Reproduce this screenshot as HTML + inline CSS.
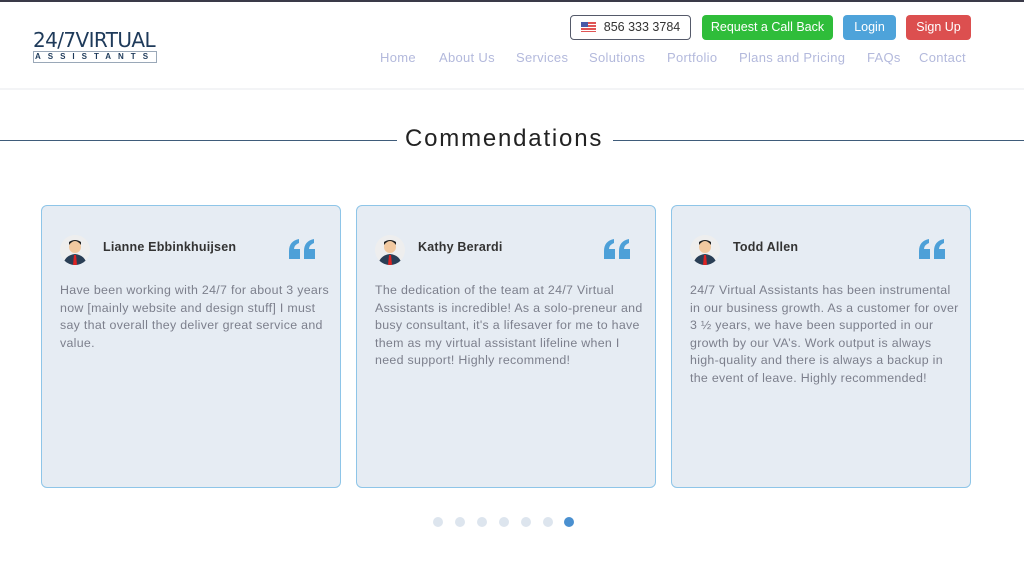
<!DOCTYPE html><html><head><style>
*{margin:0;padding:0;box-sizing:border-box}
body{width:1024px;height:575px;overflow:hidden;background:#fff;font-family:"Liberation Sans",sans-serif;position:relative}
.a{position:absolute}
.btn{position:absolute;top:15px;height:25px;border-radius:4px;color:#fff;font-size:12.5px;line-height:25px;text-align:center}
.nav{position:absolute;top:50px;font-size:13px;color:#b3b9dc;letter-spacing:.3px}
.card{position:absolute;top:205px;width:300px;height:283px;background:#e6ecf3;border:1px solid #8ec5e8;border-radius:6px}
.av{position:absolute;left:18px;top:29px;width:30px;height:30px;border-radius:50%;background:#eee;overflow:hidden}
.nm{position:absolute;left:61px;top:34px;font-size:12.5px;font-weight:bold;color:#333;letter-spacing:.2px}
.q{position:absolute;left:247px;top:33px}
.tx{position:absolute;left:18px;top:76px;width:274px;font-size:12.4px;line-height:17.5px;color:#7c7f8c;letter-spacing:.3px}
.dot{position:absolute;top:517px;width:10px;height:10px;border-radius:50%;background:#dde5ee}
</style></head><body>
<div class="a" style="left:0;top:0;width:1024px;height:2px;background:#3a3a48"></div>
<div class="a" style="left:0;top:88px;width:1024px;height:2px;background:#f3f4f6"></div>
<div class="a" style="left:33px;top:29px;font-size:20px;color:#1e3a5a;font-family:'DejaVu Sans',sans-serif;line-height:22px;letter-spacing:-0.6px">24/7VIRTUAL</div>
<div class="a" style="left:33px;top:51px;width:124px;height:12px;border:1px solid #9aa8b8;font-size:8px;color:#1e3a5a;letter-spacing:7px;text-align:center;line-height:10px;font-weight:bold">ASSISTANTS</div>
<div class="btn" style="left:570px;width:121px;border:1px solid #555a6a;color:#333;line-height:23px;background:#fff"><span style="display:inline-block;width:15px;height:10px;background:repeating-linear-gradient(#e05555 0 2px,#fff 2px 3px);position:relative;vertical-align:-1px;margin-right:8px"><span style="position:absolute;left:0;top:0;width:7px;height:5px;background:#4a5aa8"></span></span>856 333 3784</div>
<div class="btn" style="left:702px;width:131px;background:#2fbd3a">Request a Call Back</div>
<div class="btn" style="left:843px;width:53px;background:#4ea3da">Login</div>
<div class="btn" style="left:906px;width:65px;background:#dc4f4f">Sign Up</div>
<div class="nav" style="left:380px">Home</div>
<div class="nav" style="left:439px">About Us</div>
<div class="nav" style="left:516px">Services</div>
<div class="nav" style="left:589px">Solutions</div>
<div class="nav" style="left:667px">Portfolio</div>
<div class="nav" style="left:739px">Plans and Pricing</div>
<div class="nav" style="left:867px">FAQs</div>
<div class="nav" style="left:919px">Contact</div>
<div class="a" style="left:0;top:140px;width:397px;height:1px;background:#3f5c7a"></div>
<div class="a" style="left:613px;top:140px;width:411px;height:1px;background:#3f5c7a"></div>
<div class="a" style="left:405px;top:125px;font-size:24px;color:#222;letter-spacing:1.8px">Commendations</div>
<svg width="0" height="0" style="position:absolute"><defs><symbol id="qq" viewBox="0 0 27 20"><path d="M0 20V12Q0 2 10 0V4Q5 6 5 10H11V20Z" fill="#4da0d8"/><path d="M15 20V12Q15 2 25 0V4Q20 6 20 10H26V20Z" fill="#4da0d8"/></symbol></defs></svg>
<div class="card" style="left:41px"><div class="av"><svg width="30" height="30"><circle cx="15" cy="12" r="6" fill="#f2c9a0"/><path d="M9 10q6-8 12 0v-3q-6-4-12 0z" fill="#222"/><path d="M3 30q2-10 12-11q10 1 12 11z" fill="#2a3e55"/><path d="M14 20h2l1 10h-4z" fill="#d22"/></svg></div><div class="nm">Lianne Ebbinkhuijsen</div><svg class="q" width="27" height="20"><use href="#qq"/></svg><div class="tx">Have been working with 24/7 for about 3 years now [mainly website and design stuff] I must say that overall they deliver great service and value.</div></div>
<div class="card" style="left:356px"><div class="av"><svg width="30" height="30"><circle cx="15" cy="12" r="6" fill="#f2c9a0"/><path d="M9 10q6-8 12 0v-3q-6-4-12 0z" fill="#222"/><path d="M3 30q2-10 12-11q10 1 12 11z" fill="#2a3e55"/><path d="M14 20h2l1 10h-4z" fill="#d22"/></svg></div><div class="nm">Kathy Berardi</div><svg class="q" width="27" height="20"><use href="#qq"/></svg><div class="tx">The dedication of the team at 24/7 Virtual Assistants is incredible! As a solo-preneur and busy consultant, it's a lifesaver for me to have them as my virtual assistant lifeline when I need support! Highly recommend!</div></div>
<div class="card" style="left:671px"><div class="av"><svg width="30" height="30"><circle cx="15" cy="12" r="6" fill="#f2c9a0"/><path d="M9 10q6-8 12 0v-3q-6-4-12 0z" fill="#222"/><path d="M3 30q2-10 12-11q10 1 12 11z" fill="#2a3e55"/><path d="M14 20h2l1 10h-4z" fill="#d22"/></svg></div><div class="nm">Todd Allen</div><svg class="q" width="27" height="20"><use href="#qq"/></svg><div class="tx">24/7 Virtual Assistants has been instrumental in our business growth. As a customer for over 3 ½ years, we have been supported in our growth by our VA’s. Work output is always high-quality and there is always a backup in the event of leave. Highly recommended!</div></div>
<div class="dot" style="left:433px"></div><div class="dot" style="left:455px"></div><div class="dot" style="left:477px"></div><div class="dot" style="left:499px"></div><div class="dot" style="left:521px"></div><div class="dot" style="left:543px"></div><div class="dot" style="left:564px;background:#4a90d0"></div>
</body></html>
